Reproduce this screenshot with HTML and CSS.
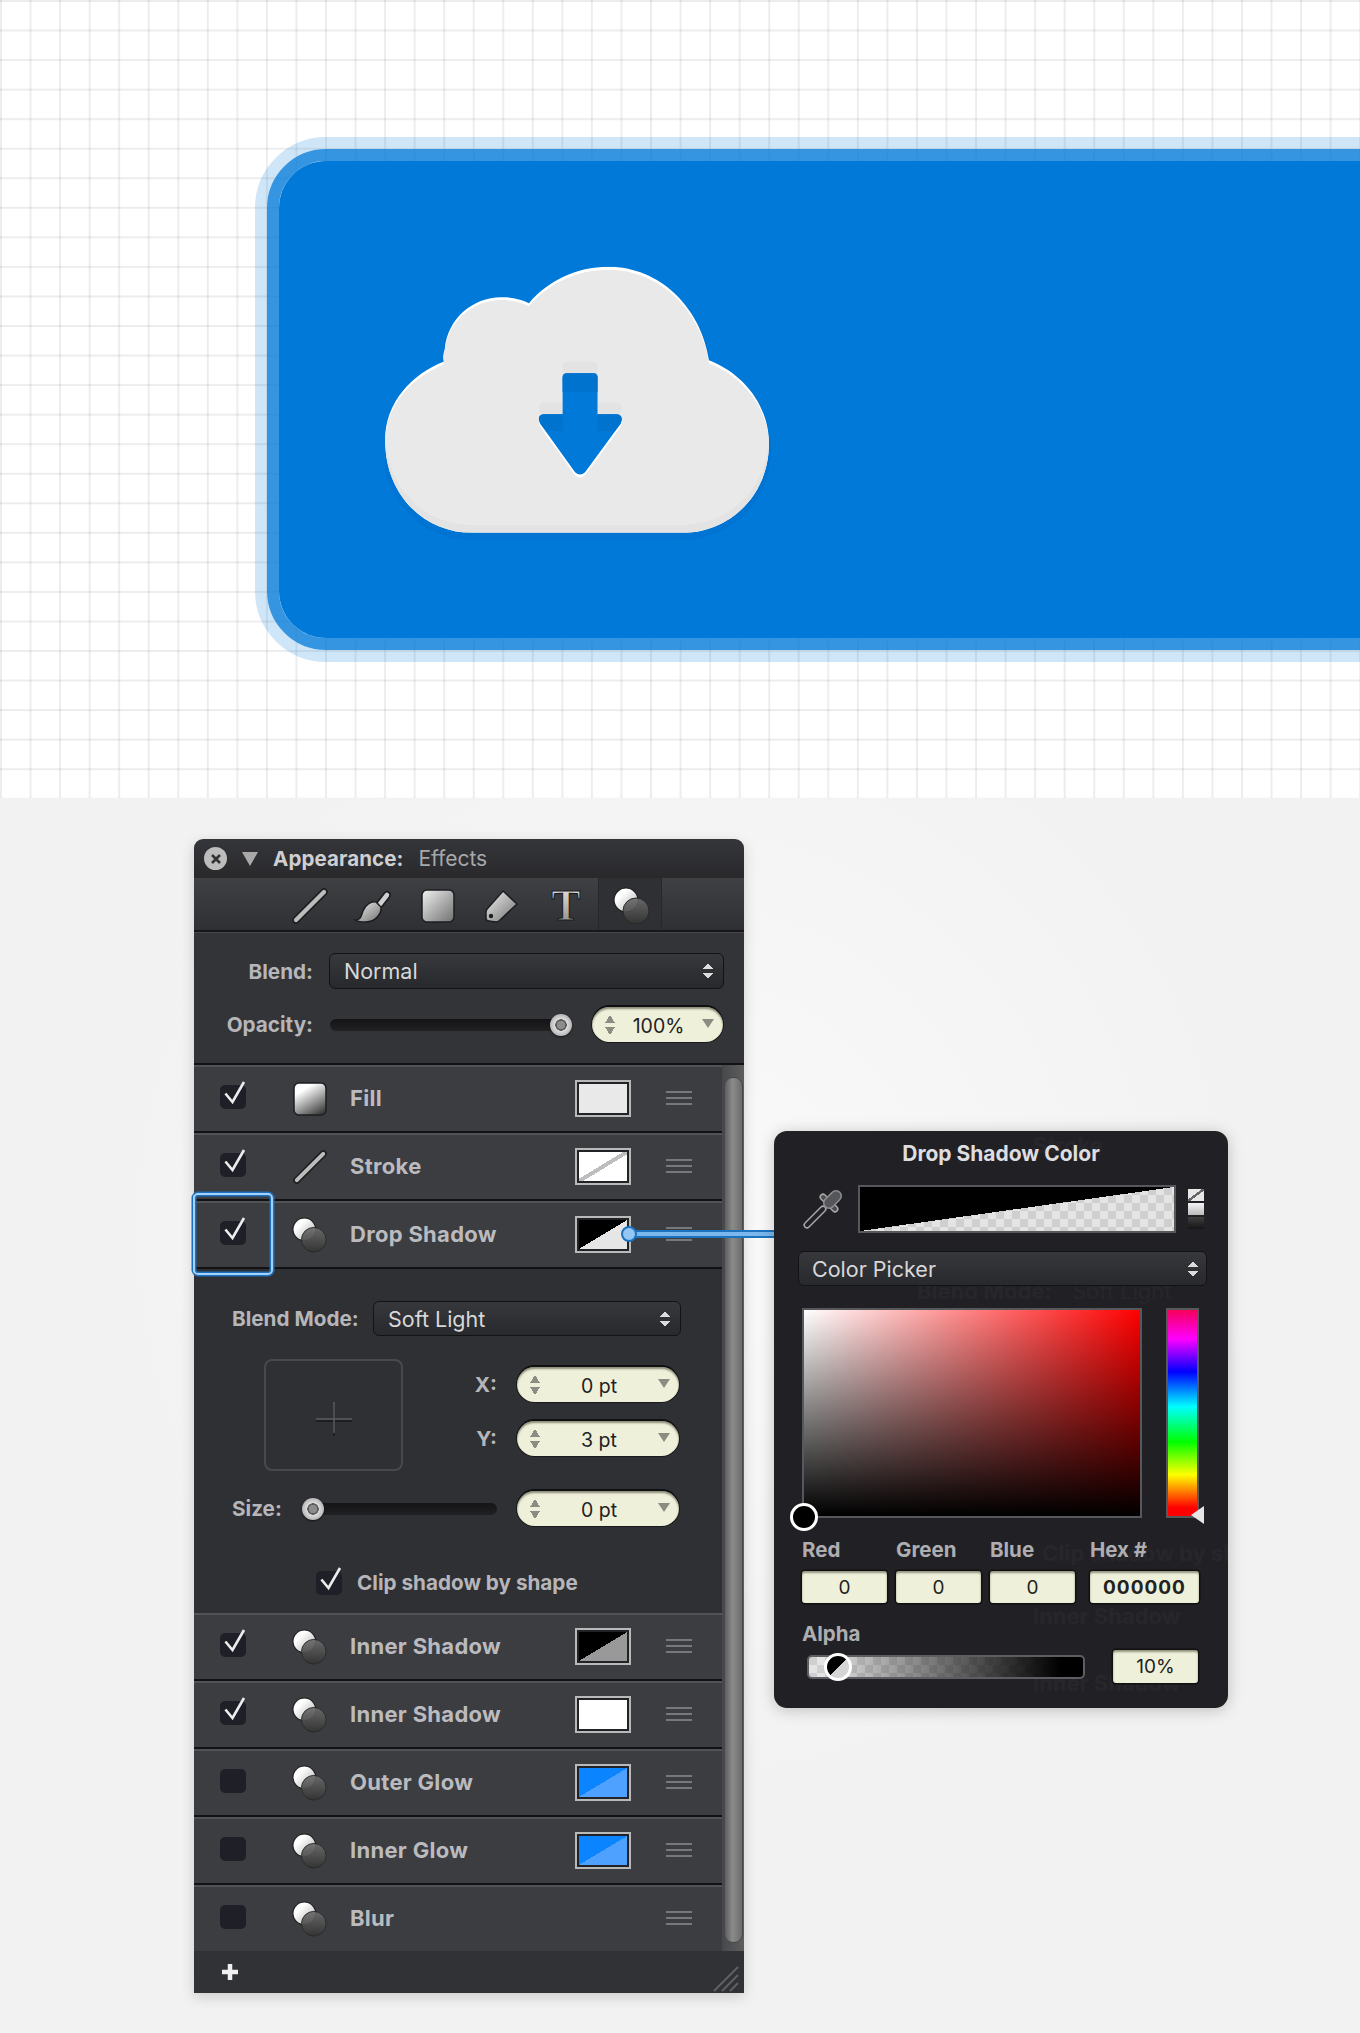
FILE: index.html
```html
<!DOCTYPE html>
<html>
<head>
    <title>Appearance Effects</title>
    <meta name="viewport" content="width=device-width, initial-scale=1">
    <link rel="stylesheet" href="styles.css">
</head>
<body>
    <svg class="defs" width="0" height="0">
        <defs>
            <linearGradient id="metal" x1="0" y1="0" x2="1" y2="1">
                <stop offset="0" stop-color="#f2f2f2"/>
                <stop offset="1" stop-color="#6f6f6f"/>
            </linearGradient>
            <linearGradient id="fillGrad" x1="0.2" y1="0" x2="0.8" y2="1">
                <stop offset="0.2" stop-color="#fff"/>
                <stop offset="1" stop-color="#3a3a3a"/>
            </linearGradient>
            <linearGradient id="metalDown" x1="0" y1="0" x2="0" y2="1">
                <stop offset="0" stop-color="#f0f0f0"/>
                <stop offset="1" stop-color="#808080"/>
            </linearGradient>
            <linearGradient id="ball" x1="0" y1="0" x2="1" y2="1">
                <stop offset="0.3" stop-color="#fff"/>
                <stop offset="1" stop-color="#aaa"/>
            </linearGradient>
            <linearGradient id="ballDark" x1="0" y1="0" x2="0" y2="1">
                <stop offset="0" stop-color="#6c6c6c"/>
                <stop offset="1" stop-color="#333"/>
            </linearGradient>
            <symbol id="i-line" viewBox="0 0 36 36">
                <path d="M4 32L32 4" stroke="#1d1e20" stroke-width="7.5" stroke-linecap="round"/>
                <path d="M4 32L32 4" stroke="#bcbcbc" stroke-width="4.2" stroke-linecap="round"/>
            </symbol>
            <symbol id="i-brush" viewBox="0 0 38 38">
                <path d="M27 17L34 8" stroke="#1d1e20" stroke-width="8" stroke-linecap="round"/>
                <path d="M27 17L34 8" stroke="#d0d0d0" stroke-width="4.5" stroke-linecap="round"/>
                <path d="M2 33C8 33 8 29 10 24C12 18 18 14 23 15L28 20C29 27 22 35 13 35C8 35 4 35 2 33Z" fill="url(#metal)" stroke="#1d1e20" stroke-width="1.5"/>
            </symbol>
            <symbol id="i-square" viewBox="0 0 34 34">
                <rect x="1" y="1" width="32" height="32" rx="5" fill="url(#metal)" stroke="#1d1e20" stroke-width="1.5"/>
            </symbol>
            <symbol id="i-fill" viewBox="0 0 34 34">
                <rect x="1" y="1" width="32" height="32" rx="5" fill="url(#fillGrad)" stroke="#1d1e20" stroke-width="1.5"/>
            </symbol>
            <symbol id="i-tag" viewBox="0 0 36 36">
                <path d="M19 3L33 16L15 33Q14 34 12 34L5 33Q2 33 2 30L2 24Q2 22 4 20Z" fill="url(#metal)" stroke="#1d1e20" stroke-width="1.5"/>
                <circle cx="7" cy="28" r="2.2" fill="#1d1e20"/>
            </symbol>
            <symbol id="i-fx" viewBox="0 0 38 38">
                <circle cx="13" cy="13" r="12" fill="url(#ball)" stroke="#1d1e20" stroke-width="1.2"/>
                <circle cx="23" cy="24" r="13" fill="url(#ballDark)" fill-opacity=".92" stroke="#29292b" stroke-width="1"/>
            </symbol>
            <symbol id="i-check" viewBox="0 0 26 24" overflow="visible">
                <path d="M5.4 8.5L12.5 17L24 -3" fill="none" stroke="#ececec" stroke-width="2.6"/>
            </symbol>
        </defs>
    </svg>

    <div class="canvas">
        <div class="btn-glow">
            <div class="btn-ring">
                <div class="btn-face">
                    <svg class="cloud" width="388" height="300" viewBox="405 405 1086 840">
                        <defs>
                            <path id="cloudShape" d="M650 1155C510 1155 405 1045 405 895C405 790 480 710 570 675C565 660 570 650 572 640C580 555 650 495 730 495C760 495 785 500 808 512C860 450 940 410 1030 410C1175 410 1290 525 1312 672C1410 710 1480 800 1480 905C1480 1045 1375 1155 1235 1155Z"/>
                            <path id="arrowShape" d="M915 708H988Q1000 708 1000 720V823H1052Q1075 825 1064 850L965 985Q951 998 937 985L840 850Q828 825 850 823H902V720Q902 708 915 708Z"/>
                            <clipPath id="cloudClip"><use href="#cloudShape"/></clipPath>
                            <clipPath id="cloudUp"><use href="#cloudShape" transform="translate(0 -22)"/></clipPath>
                        </defs>
                        <use href="#cloudShape" transform="translate(0 14)" fill="#0074d2" stroke="#0074d2" stroke-width="12"/>
                        <g clip-path="url(#cloudClip)">
                            <rect x="400" y="400" width="1100" height="800" fill="#fff"/>
                            <use href="#cloudShape" transform="translate(0 9)" fill="#e3e3e3"/>
                            <g clip-path="url(#cloudUp)">
                                <use href="#cloudShape" transform="translate(0 9)" fill="#e9e9e9"/>
                            </g>
                        </g>
                        <use href="#arrowShape" transform="translate(0 -32)" fill="#e3e3e3"/>
                        <use href="#arrowShape" transform="translate(0 9)" fill="#fff"/>
                        <use href="#arrowShape" fill="#0079d8"/>
                        <path d="M902 720Q902 708 915 708H988Q1000 708 1000 720V760H902ZM840 850Q828 825 850 823H902V870H857ZM1000 823H1052Q1075 825 1064 850L1048 870H1000Z" fill="#0073cf"/>
                    </svg>
                </div>
            </div>
        </div>
    </div>

    <div class="stage">
        <div class="panel">
            <div class="titlebar">
                <span class="close">
                    <svg width="12" height="12" viewBox="0 0 12 12"><path d="M2 2L10 10M10 2L2 10" stroke="#333" stroke-width="2.6"/></svg>
                </span>
                <span class="disclosure"></span>
                <span class="title-main">Appearance:</span>
                <span class="title-sub">Effects</span>
            </div>

            <div class="toolbar">
                <span class="tool"><svg width="36" height="36"><use href="#i-line"/></svg></span>
                <span class="tool tool-brush"><svg width="38" height="38"><use href="#i-brush"/></svg></span>
                <span class="tool"><svg width="34" height="34"><use href="#i-square"/></svg></span>
                <span class="tool"><svg width="36" height="36"><use href="#i-tag"/></svg></span>
                <span class="tool">
                    <svg width="36" height="38" viewBox="0 0 36 38"><text class="tool-t" x="18" y="33" fill="url(#metalDown)">T</text></svg>
                </span>
                <span class="tool tool-active"><svg width="38" height="38"><use href="#i-fx"/></svg></span>
            </div>

            <div class="blend">
                <div class="blend-row">
                    <span class="lbl blend-lbl">Blend:</span>
                    <div class="select blend-select"><span>Normal</span><i class="updown"></i></div>
                </div>
                <div class="blend-row opacity-row">
                    <span class="lbl blend-lbl">Opacity:</span>
                    <div class="slider opacity-slider"><span class="knob knob-end"></span></div>
                    <div class="stepper stepper-small"><i class="arrows"></i><span class="val">100%</span><i class="caret"></i></div>
                </div>
            </div>

            <div class="body">
                <div class="list">
                    <div class="row">
                        <span class="box"><svg width="26" height="24"><use href="#i-check"/></svg></span>
                        <svg class="row-icon" width="36" height="34"><use href="#i-fill"/></svg>
                        <span class="row-name">Fill</span>
                        <span class="swatch sw-fill"></span>
                        <i class="handle"></i>
                    </div>
                    <div class="row">
                        <span class="box"><svg width="26" height="24"><use href="#i-check"/></svg></span>
                        <svg class="row-icon" width="36" height="34"><use href="#i-line"/></svg>
                        <span class="row-name">Stroke</span>
                        <span class="swatch sw-stroke"></span>
                        <i class="handle"></i>
                    </div>
                    <div class="row row-open">
                        <span class="box"><svg width="26" height="24"><use href="#i-check"/></svg></span>
                        <svg class="row-icon" width="36" height="36"><use href="#i-fx"/></svg>
                        <span class="row-name">Drop Shadow</span>
                        <span class="swatch sw-drop"></span>
                        <i class="handle"></i>
                        <span class="focus-ring"></span>
                        <span class="link-line"></span>
                        <span class="link-dot"></span>
                    </div>

                    <div class="shadow-opts">
                        <div class="opts-blend">
                            <span class="lbl opts-lbl">Blend Mode:</span>
                            <div class="select opts-select"><span>Soft Light</span><i class="updown"></i></div>
                        </div>
                        <div class="offset">
                            <div class="offset-box">
                                <svg width="38" height="36" viewBox="0 0 38 36">
                                    <path d="M1 20H37M19 3V35" stroke="#1e1e20" stroke-width="2"/>
                                    <path d="M1 18H37M19 1V32" stroke="#5b5c60" stroke-width="1.5"/>
                                </svg>
                            </div>
                            <div class="offset-fields">
                                <div class="field">
                                    <span class="lbl">X:</span>
                                    <div class="stepper"><i class="arrows"></i><span class="val">0 pt</span><i class="caret"></i></div>
                                </div>
                                <div class="field">
                                    <span class="lbl">Y:</span>
                                    <div class="stepper"><i class="arrows"></i><span class="val">3 pt</span><i class="caret"></i></div>
                                </div>
                            </div>
                        </div>
                        <div class="size-row">
                            <span class="lbl size-lbl">Size:</span>
                            <div class="slider size-slider"><span class="knob"></span></div>
                            <div class="stepper"><i class="arrows"></i><span class="val">0 pt</span><i class="caret"></i></div>
                        </div>
                        <div class="clip-row">
                            <span class="box"><svg width="26" height="24"><use href="#i-check"/></svg></span>
                            <span class="lbl clip-lbl">Clip shadow by shape</span>
                        </div>
                    </div>

                    <div class="row">
                        <span class="box"><svg width="26" height="24"><use href="#i-check"/></svg></span>
                        <svg class="row-icon" width="36" height="36"><use href="#i-fx"/></svg>
                        <span class="row-name">Inner Shadow</span>
                        <span class="swatch sw-inner"></span>
                        <i class="handle"></i>
                    </div>
                    <div class="row">
                        <span class="box"><svg width="26" height="24"><use href="#i-check"/></svg></span>
                        <svg class="row-icon" width="36" height="36"><use href="#i-fx"/></svg>
                        <span class="row-name">Inner Shadow</span>
                        <span class="swatch sw-white"></span>
                        <i class="handle"></i>
                    </div>
                    <div class="row">
                        <span class="box"></span>
                        <svg class="row-icon" width="36" height="36"><use href="#i-fx"/></svg>
                        <span class="row-name">Outer Glow</span>
                        <span class="swatch sw-glow"></span>
                        <i class="handle"></i>
                    </div>
                    <div class="row">
                        <span class="box"></span>
                        <svg class="row-icon" width="36" height="36"><use href="#i-fx"/></svg>
                        <span class="row-name">Inner Glow</span>
                        <span class="swatch sw-glow"></span>
                        <i class="handle"></i>
                    </div>
                    <div class="row row-last">
                        <span class="box"></span>
                        <svg class="row-icon" width="36" height="36"><use href="#i-fx"/></svg>
                        <span class="row-name">Blur</span>
                        <i class="handle"></i>
                    </div>
                </div>
                <div class="scroll"><div class="thumb"></div></div>
            </div>

            <div class="footer">
                <svg width="16" height="16" viewBox="0 0 16 16"><path d="M8 0V16M0 8H16" stroke="#f0f0f0" stroke-width="4.5"/></svg>
                <svg class="grip" width="26" height="26" viewBox="0 0 26 26">
                    <path d="M1 25L25 1M9 25L25 9M17 25L25 17" stroke="#5f6064" stroke-width="2"/>
                </svg>
            </div>
        </div>

        <div class="popover">
            <div class="ghost">
                <span class="ghost-a">Stroke</span>
                <span class="ghost-b">Blend Mode:</span>
                <span class="ghost-c">Soft Light</span>
                <span class="ghost-d">Clip shadow by sh</span>
                <span class="ghost-e">Inner Shadow</span>
                <span class="ghost-f">Inner Shadow</span>
            </div>
            <div class="pop-inner">
                <div class="pop-title">Drop Shadow Color</div>
                <div class="preview-row">
                    <svg width="40" height="40" viewBox="0 0 40 40">
                        <path d="M5 36L21 20" stroke="#a9a9a9" stroke-width="7" stroke-linecap="round"/>
                        <path d="M5 36L21 20" stroke="#212125" stroke-width="4" stroke-linecap="round"/>
                        <path d="M21 8L33 20" stroke="#a9a9a9" stroke-width="7" stroke-linecap="round"/>
                        <path d="M21 8L33 20" stroke="#4c4d50" stroke-width="4" stroke-linecap="round"/>
                        <path d="M27 14L34 7" stroke="#8f8f8f" stroke-width="12" stroke-linecap="round"/>
                        <path d="M27 14L34 7" stroke="#55565a" stroke-width="9" stroke-linecap="round"/>
                    </svg>
                    <div class="preview"></div>
                    <div class="minis">
                        <span class="mini mini-none"></span>
                        <span class="mini mini-light"></span>
                        <span class="mini mini-dark"></span>
                    </div>
                </div>
                <div class="select pop-select"><span>Color Picker</span><i class="updown"></i></div>
                <div class="picker">
                    <div class="sat"><span class="sat-knob"></span></div>
                    <div class="hue"><span class="hue-mark"></span></div>
                </div>
                <div class="channels">
                    <div class="channel"><span class="lbl ch-lbl">Red</span><span class="input">0</span></div>
                    <div class="channel"><span class="lbl ch-lbl">Green</span><span class="input">0</span></div>
                    <div class="channel"><span class="lbl ch-lbl">Blue</span><span class="input">0</span></div>
                    <div class="channel channel-hex"><span class="lbl ch-lbl">Hex #</span><span class="input input-hex">000000</span></div>
                </div>
                <div class="lbl ch-lbl alpha-lbl">Alpha</div>
                <div class="alpha-row">
                    <div class="alpha"><span class="alpha-knob"></span></div>
                    <span class="input alpha-val">10%</span>
                </div>
            </div>
        </div>
    </div>
</body>
</html>
```

FILE: styles.css
```css
* {
    box-sizing: border-box;
}
body {
    margin: 0;
    height: 2033px;
    overflow: hidden;
    font-family: Inter, "Liberation Sans", sans-serif;
    background-color: #f3f3f3;
}
.defs {
    position: absolute;
}

/* artboard */
.canvas {
    height: 798px;
    overflow: hidden;
    padding: 137px 0 0 255px;
    background-color: #fff;
    background-image:
        linear-gradient(rgba(0, 0, 0, 0.07) 1.7px, transparent 1.7px),
        linear-gradient(90deg, rgba(0, 0, 0, 0.07) 1.7px, transparent 1.7px);
    background-size: 29.55px 29.55px;
}
.btn-glow {
    width: 1300px;
    height: 525px;
    border: 12px solid rgba(0, 121, 216, 0.19);
    border-radius: 71px;
}
.btn-ring {
    height: 100%;
    border: 12px solid rgba(0, 121, 216, 0.79);
    border-radius: 59px;
}
.btn-face {
    height: 100%;
    padding: 104px 0 0 106px;
    background-color: #0079d8;
    border-radius: 47px;
}
.cloud {
    display: block;
}

/* lower area */
.stage {
    display: flex;
    align-items: flex-start;
    height: 1235px;
    padding: 41px 0 0 194px;
    background: radial-gradient(circle at 50% 35%, #fafafa, #f2f2f2 55%);
}

.panel {
    flex: none;
    width: 550px;
    color: #b6b6ba;
    border-radius: 9px 9px 0 0;
    box-shadow: 0 4px 14px rgba(0, 0, 0, 0.16);
}
.titlebar {
    display: flex;
    align-items: center;
    height: 39px;
    padding-left: 10px;
    background: linear-gradient(#35363a, #29292c);
    border-radius: 9px 9px 0 0;
}
.close {
    display: flex;
    align-items: center;
    justify-content: center;
    width: 23px;
    height: 23px;
    background-color: #bdbdbd;
    border-radius: 50%;
}
.disclosure {
    width: 0;
    height: 0;
    margin-left: 15px;
    border-top: 14px solid #a9a9a9;
    border-left: 8.5px solid transparent;
    border-right: 8.5px solid transparent;
}
.title-main {
    margin-left: 15px;
    font-size: 20.5px;
    font-weight: 700;
    letter-spacing: 0.1px;
    color: #cfcfd1;
}
.title-sub {
    margin-left: 15px;
    font-size: 21px;
    color: #a8a8ab;
}
.toolbar {
    display: flex;
    height: 54px;
    padding-left: 84px;
    background: linear-gradient(#3f4044, #2f3034);
    border-bottom: 2px solid #17171a;
}
.tool {
    display: flex;
    align-items: center;
    justify-content: center;
    width: 64px;
}
.tool svg {
    margin-top: 4px;
    overflow: visible;
}
.tool-brush svg {
    margin-left: -4px;
}
.tool-active {
    background-color: #2f3034;
    border-left: 1px solid #28282b;
    border-right: 1px solid #28282b;
}
.tool-active svg {
    margin-left: 3px;
}
.tool-t {
    font-family: "Liberation Serif", serif;
    font-size: 44px;
    font-weight: 700;
    text-anchor: middle;
    stroke: #1d1e20;
    stroke-width: 1.2;
}

.lbl {
    font-size: 20.7px;
    font-weight: 700;
    color: #b6b6ba;
}
.blend {
    height: 133px;
    padding: 20px 0 0 0;
    background-color: #333437;
    border-top: 1px solid #45464a;
    border-bottom: 2px solid #131315;
}
.blend-row {
    display: flex;
    align-items: center;
    height: 36px;
}
.blend-lbl {
    width: 119px;
    text-align: right;
}
.opacity-row {
    margin-top: 18px;
    height: 35px;
}

.select {
    display: flex;
    align-items: center;
    justify-content: space-between;
    height: 36px;
    padding: 0 10px 0 14px;
    font-size: 21.5px;
    color: #d8d8da;
    background: linear-gradient(#37383c, #28292c);
    border: 1.5px solid #131315;
    border-radius: 6px;
}
.blend-select {
    width: 395px;
    margin-left: 16px;
}
.updown {
    display: block;
    width: 10px;
    height: 20px;
    background:
        linear-gradient(to bottom right, transparent 50%, #dcdcdc 50%) 0 2px / 5px 6px no-repeat,
        linear-gradient(to bottom left, transparent 50%, #dcdcdc 50%) 5px 2px / 5px 6px no-repeat,
        linear-gradient(to top right, transparent 50%, #dcdcdc 50%) 0 12px / 5px 6px no-repeat,
        linear-gradient(to top left, transparent 50%, #dcdcdc 50%) 5px 12px / 5px 6px no-repeat;
}

.slider {
    position: relative;
    height: 12px;
    background: linear-gradient(#141416, #212123);
    border-radius: 6px;
}
.opacity-slider {
    width: 242px;
    margin-left: 17px;
}
.knob {
    position: absolute;
    top: -5px;
    left: 0;
    width: 22px;
    height: 22px;
    background: radial-gradient(circle, #8c8c8c 0 4px, #5c5c5c 4.5px 5.5px, #dedede 6px, #b5b5b5 11px);
    border-radius: 50%;
    box-shadow: 0 1px 2px rgba(0, 0, 0, 0.6);
}
.knob-end {
    left: auto;
    right: 0;
}

.stepper {
    display: flex;
    flex: none;
    align-items: center;
    width: 162px;
    height: 35px;
    padding: 0 9px 0 13px;
    font-size: 19.5px;
    color: #222;
    background-color: #eef0da;
    border-radius: 18px;
    box-shadow: inset 0 2px 2px rgba(60, 60, 40, 0.55), 0 -2px 0 #101012, 0 0 0 1px #1a1a1c;
}
.stepper-small {
    width: 131px;
    margin-left: 20px;
}
.arrows {
    display: block;
    width: 10px;
    height: 22px;
    background:
        linear-gradient(to bottom right, transparent 50%, #8c8c82 50%) 0 1px / 5px 8px no-repeat,
        linear-gradient(to bottom left, transparent 50%, #8c8c82 50%) 5px 1px / 5px 8px no-repeat,
        linear-gradient(to top right, transparent 50%, #8c8c82 50%) 0 13px / 5px 8px no-repeat,
        linear-gradient(to top left, transparent 50%, #8c8c82 50%) 5px 13px / 5px 8px no-repeat;
}
.val {
    flex: 1;
    padding-top: 2px;
    text-align: center;
}
.caret {
    width: 0;
    height: 0;
    margin-top: -3px;
    border-top: 9px solid #8c8c82;
    border-left: 6px solid transparent;
    border-right: 6px solid transparent;
}

/* effect rows */
.body {
    display: flex;
}
.list {
    flex: 1;
}
.row {
    position: relative;
    display: flex;
    align-items: center;
    height: 68px;
    padding: 0 30px 2px 26px;
    background-color: #3c3d41;
    border-top: 2px solid #525357;
    border-bottom: 2px solid #121214;
}
.row-last {
    height: 66px;
    border-bottom: 0;
}
.box {
    display: block;
    flex: none;
    width: 26px;
    height: 24px;
    background-color: #1f2027;
    border-radius: 5px;
}
.row .box {
    margin-top: -2px;
}
.box svg {
    display: block;
    overflow: visible;
}
.row-icon {
    flex: none;
    margin: 2px 0 0 46px;
}
.row-name {
    flex: 1;
    margin-left: 22px;
    font-size: 22px;
    font-weight: 700;
    letter-spacing: 0.3px;
    color: #bbbbbf;
}
.swatch {
    flex: none;
    width: 52px;
    height: 33px;
    margin: 0 2px;
    border: 2px solid #222326;
    outline: 2px solid #b9b9b9;
}
.sw-fill {
    background-color: #e9e9e9;
}
.sw-stroke {
    background: linear-gradient(to bottom right, #fff 46%, #bdbdbd 46%, #bdbdbd 54%, #fff 54%);
}
.sw-drop {
    background: linear-gradient(to bottom right, #000 50%, #e6e6e6 50%);
}
.sw-inner {
    background: linear-gradient(to bottom right, #000 50%, #999 50%);
}
.sw-white {
    background-color: #fff;
}
.sw-glow {
    background: linear-gradient(to bottom right, #0a84ff 50%, #4ea1ff 50%);
}
.handle {
    display: block;
    flex: none;
    width: 26px;
    height: 14px;
    margin-left: 35px;
    border-top: 2px solid #77787c;
    border-bottom: 2px solid #77787c;
    background: linear-gradient(#77787c, #77787c) 0 4px / 100% 2px no-repeat;
}
.focus-ring {
    position: absolute;
    left: -1px;
    top: -10px;
    width: 80px;
    height: 82px;
    border: 2px solid #a4d2fa;
    border-radius: 5px;
    box-shadow: 0 0 0 1.5px #1b71c0, inset 0 0 0 1.5px #1b71c0;
}
.link-line {
    position: absolute;
    z-index: 2;
    left: 435px;
    top: 27px;
    width: 148px;
    height: 8px;
    background-color: #79b7ec;
    border-top: 2px solid #1c72bc;
    border-bottom: 2px solid #1c72bc;
}
.link-dot {
    position: absolute;
    z-index: 2;
    left: 427px;
    top: 23px;
    width: 16px;
    height: 16px;
    background-color: #93c6f5;
    border: 2px solid #1c72bc;
    border-radius: 50%;
}

.shadow-opts {
    height: 344px;
    padding: 32px 41px 0 38px;
    background-color: #2f3033;
}
.opts-blend {
    display: flex;
    align-items: center;
}
.opts-lbl {
    width: 141px;
}
.opts-select {
    width: 308px;
    height: 35px;
}
.offset {
    display: flex;
    margin-top: 23px;
    padding-left: 32px;
}
.offset-box {
    display: flex;
    align-items: center;
    justify-content: center;
    width: 139px;
    height: 112px;
    padding-top: 8px;
    border: 2px solid #48494c;
    border-radius: 8px;
}
.offset-fields {
    display: flex;
    flex-direction: column;
    gap: 19px;
    margin: 0 2px 0 auto;
    padding-top: 8px;
}
.field {
    display: flex;
    align-items: center;
    justify-content: flex-end;
    gap: 20px;
}
.size-row {
    display: flex;
    align-items: center;
    margin-top: 20px;
}
.size-lbl {
    width: 70px;
}
.size-slider {
    width: 195px;
}
.size-row .stepper {
    margin: 0 2px 0 auto;
}
.clip-row {
    display: flex;
    align-items: center;
    margin-top: 44px;
    padding-left: 84px;
}
.clip-lbl {
    margin-left: 15px;
}

.scroll {
    flex: none;
    width: 22px;
    padding: 12px 1px 8px 2px;
    background: linear-gradient(90deg, #47484b, #5e5e5f);
}
.thumb {
    height: 100%;
    background: linear-gradient(90deg, #5f5f5f, #8b8b8b 45%, #6b6b6b);
    border: 1px solid #47484a;
    border-radius: 9px;
}
.footer {
    display: flex;
    align-items: center;
    justify-content: space-between;
    height: 42px;
    padding: 0 5px 0 28px;
    background-color: #313236;
}
.grip {
    margin-top: 14px;
}

/* colour popover */
.popover {
    position: relative;
    z-index: 3;
    flex: none;
    width: 454px;
    height: 577px;
    margin: 292px 0 0 30px;
    background-color: #212125;
    border-radius: 13px;
    box-shadow: 0 2px 16px rgba(0, 0, 0, 0.22);
}
.ghost {
    position: absolute;
    inset: 0;
    overflow: hidden;
    border-radius: 13px;
    font-size: 22px;
    font-weight: 700;
    color: #27272b;
    white-space: nowrap;
}
.ghost span {
    position: absolute;
}
.ghost-a { left: 259px; top: 1px; }
.ghost-b { left: 143px; top: 147px; }
.ghost-c { left: 298px; top: 147px; font-weight: 400; }
.ghost-d { left: 268px; top: 409px; }
.ghost-e { left: 259px; top: 472px; }
.ghost-f { left: 259px; top: 539px; }

.pop-inner {
    position: relative;
    padding: 12px 20px 0 28px;
}
.pop-title {
    height: 22px;
    margin-right: 8px;
    font-size: 21px;
    font-weight: 700;
    line-height: 22px;
    text-align: center;
    color: #dedee0;
}
.preview-row {
    display: flex;
    align-items: center;
    margin-top: 20px;
}
.preview {
    flex: none;
    width: 318px;
    height: 48px;
    margin-left: 16px;
    border: 2px solid #57585b;
    background:
        linear-gradient(to bottom right, #000 50%, transparent 50%),
        conic-gradient(#e4e4e4 25%, #cfcfcf 0 50%, #e4e4e4 0 75%, #cfcfcf 0) 0 0 / 16px 16px;
}
.minis {
    display: flex;
    flex-direction: column;
    gap: 2px;
    margin-left: 12px;
}
.mini {
    width: 16px;
    height: 12px;
}
.mini-none {
    background: linear-gradient(to bottom right, #e8e8e8 44%, #666 44%, #666 56%, #e8e8e8 56%);
}
.mini-light {
    background: linear-gradient(#f4f4f4, #bbb);
}
.mini-dark {
    background: linear-gradient(#3f3f3f, #151515);
}
.pop-select {
    width: 409px;
    height: 35px;
    margin: 18px 0 0 -4px;
    padding: 0 8px 0 13px;
}
.picker {
    display: flex;
    margin-top: 22px;
}
.sat {
    position: relative;
    flex: none;
    width: 340px;
    height: 210px;
    border: 2px solid #57585b;
    background:
        linear-gradient(transparent, #000),
        linear-gradient(90deg, #fff, #f00);
}
.sat-knob {
    position: absolute;
    left: -14px;
    bottom: -15px;
    width: 28px;
    height: 28px;
    background-color: #000;
    border: 3px solid #fff;
    border-radius: 50%;
}
.hue {
    position: relative;
    flex: none;
    width: 33px;
    height: 210px;
    margin-left: 24px;
    border: 2px solid #57585b;
    background: linear-gradient(#f5005a, #ff00ff 14%, #0000ff 30%, #00ffff 47%, #00ff00 64%, #ffff00 80%, #ff0000 96%);
}
.hue-mark {
    position: absolute;
    right: -7px;
    bottom: -8px;
    width: 0;
    height: 0;
    border-top: 9px solid transparent;
    border-bottom: 9px solid transparent;
    border-right: 13px solid #e6e6e6;
}
.channels {
    display: flex;
    gap: 9px;
    margin-top: 21px;
}
.channel {
    display: flex;
    flex-direction: column;
    gap: 10px;
}
.channel-hex {
    margin-left: 6px;
}
.ch-lbl {
    height: 22px;
    font-size: 20.5px;
    line-height: 22px;
    color: #aeaeb2;
}
.input {
    display: block;
    width: 85px;
    height: 32px;
    font-size: 19px;
    line-height: 34px;
    text-align: center;
    color: #222;
    background-color: #eef0da;
    border-radius: 3px;
    box-shadow: inset 0 2px 2px rgba(60, 60, 40, 0.5), 0 0 0 1.5px #111113;
}
.input-hex {
    width: 109px;
    font-weight: 700;
    letter-spacing: 1px;
}
.alpha-lbl {
    margin-top: 20px;
}
.alpha-row {
    display: flex;
    align-items: center;
    height: 33px;
    margin-top: 5px;
    padding-left: 5px;
}
.alpha {
    position: relative;
    flex: none;
    width: 278px;
    height: 24px;
    border: 2px solid #5d5e61;
    border-radius: 5px;
    background:
        linear-gradient(90deg, rgba(0, 0, 0, 0) 5%, rgba(0, 0, 0, 0.75) 70%, #000 92%),
        conic-gradient(#e4e4e4 25%, #cfcfcf 0 50%, #e4e4e4 0 75%, #cfcfcf 0) 0 0 / 16px 16px;
}
.alpha-knob {
    position: absolute;
    left: 15px;
    top: -4px;
    width: 28px;
    height: 28px;
    border: 3px solid #fff;
    border-radius: 50%;
    background: linear-gradient(to bottom right, #000 50%, #d5d5d5 50%);
}
.alpha-val {
    height: 33px;
    margin-left: 28px;
}
```
